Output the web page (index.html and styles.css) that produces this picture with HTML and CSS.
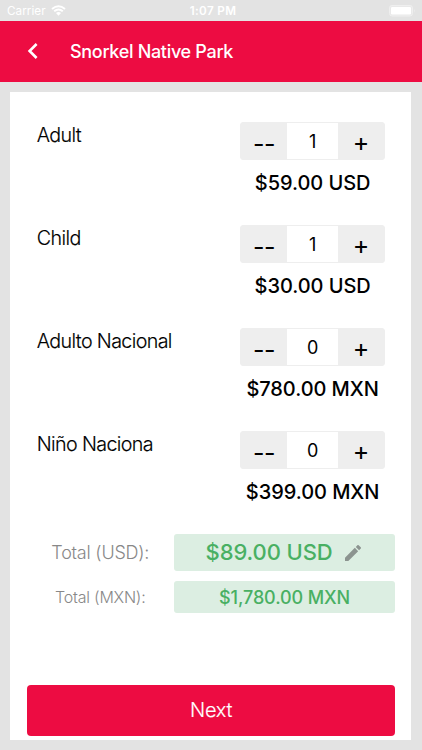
FILE: index.html
```html
<!DOCTYPE html>
<html lang="en">
<head>
<meta charset="utf-8">
<title>Snorkel Native Park</title>
<link rel="stylesheet" href="styles.css">
</head>
<body>
<div class="status">
  <div class="status-left"><span class="carrier">Carrier</span>
    <svg class="wifi" viewBox="0 0 15 11"><path d="M1 4Q7.5-1.5 14 4M3.2 6.3Q7.5 2.7 11.8 6.3" fill="none" stroke="#fff" stroke-width="1.9"/><path d="M5 8.1Q7.5 6 10 8.1L7.5 10.7z" fill="#fff"/></svg>
  </div>
  <span class="time">1:07 PM</span>
  <svg class="battery" viewBox="0 0 27 12"><rect x=".5" y=".5" width="23" height="10.5" rx="2.5" fill="#e9e9e9" stroke="#efefef"/><rect x="2" y="2" width="20" height="7.5" rx="1.2" fill="#fff"/><path d="M25 4q1.5 1.7 0 3.5z" fill="#efefef"/></svg>
</div>
<header class="header">
  <svg class="back" viewBox="0 0 12 18"><path d="M10.6 2L3.6 9l7 7" fill="none" stroke="#fff" stroke-width="2.6"/></svg>
  <h1 class="title">Snorkel Native Park</h1>
</header>
<main class="card">
  <section class="row"><span class="label">Adult</span><div class="qty"><div class="stepper"><button class="minus">--</button><span class="count">1</span><button class="plus">+</button></div><div class="price">$59.00 USD</div></div></section>
  <section class="row"><span class="label">Child</span><div class="qty"><div class="stepper"><button class="minus">--</button><span class="count">1</span><button class="plus">+</button></div><div class="price">$30.00 USD</div></div></section>
  <section class="row"><span class="label">Adulto Nacional</span><div class="qty"><div class="stepper"><button class="minus">--</button><span class="count">0</span><button class="plus">+</button></div><div class="price">$780.00 MXN</div></div></section>
  <section class="row"><span class="label">Niño Naciona</span><div class="qty"><div class="stepper"><button class="minus">--</button><span class="count">0</span><button class="plus">+</button></div><div class="price">$399.00 MXN</div></div></section>
  <div class="total total-main"><span class="total-label">Total (USD):</span><div class="amount"><span>$89.00 USD</span><svg class="pencil" viewBox="3 3 18 18"><path fill="#8c9490" d="M3 17.25V21h3.75L17.8 9.94l-3.75-3.75zM20.7 7.04a1 1 0 0 0 0-1.41l-2.34-2.34a1 1 0 0 0-1.41 0l-1.83 1.83 3.75 3.75z"/></svg></div></div>
  <div class="total total-sub"><span class="total-label">Total (MXN):</span><div class="amount"><span>$1,780.00 MXN</span></div></div>
  <button class="next">Next</button>
</main>
</body>
</html>
```
FILE: styles.css
```css
* { box-sizing: border-box; }
body { margin: 0; width: 422px; height: 750px; overflow: hidden; display: flex; flex-direction: column; background: #e3e3e3; color: #000; font-family: Inter, "Liberation Sans", sans-serif; }
button { border: 0; margin: 0; padding: 0; font-family: inherit; color: inherit; }
.status { flex: none; height: 20.5px; display: grid; grid-template-columns: 1fr auto 1fr; align-items: center; padding: 1px 6px 0 7px; color: #fff; font-size: 11.7px; }
.status-left { display: flex; align-items: center; gap: 5px; }
.carrier { letter-spacing: .05px; }
.wifi { width: 15px; height: 11px; }
.time { font-weight: 600; letter-spacing: .35px; padding-left: 3px; }
.battery { width: 27px; height: 12px; justify-self: end; }
.header { flex: none; height: 61.5px; background: #ed0c42; color: #fff; display: flex; align-items: center; padding-left: 26px; }
.back { width: 12px; height: 18px; }
.title { margin: 1px 0 0 32px; font-size: 18px; line-height: 24px; font-weight: 500; letter-spacing: -.31px; }
.card { flex: none; width: 401px; height: 648px; margin: 10px 0 0 10.4px; padding: 30.4px 16px 0 16.4px; background: #fff; display: flex; flex-direction: column; }
.row { flex: none; height: 103px; display: flex; justify-content: space-between; padding: 0 10.3px 0 10px; }
.label { padding-top: 1px; font-size: 19.7px; line-height: 25px; font-weight: 300; letter-spacing: -.63px; -webkit-text-stroke: .15px #000; }
.qty { width: 145px; }
.stepper { height: 38px; display: grid; grid-template-columns: 46px 1fr 46px; border: 1px solid #eee; border-radius: 3px; background: #eee; overflow: hidden; text-align: center; }
.minus, .plus { height: 36px; background: transparent; line-height: 34px; }
.minus { font-size: 25px; padding-top: 4px; letter-spacing: -.3px; }
.plus { font-size: 25px; padding-top: 1px; }
.count { background: #fff; font-size: 18px; line-height: 37px; }
.price { margin-top: 9.5px; font-size: 20px; line-height: 26px; font-weight: 500; text-align: center; white-space: nowrap; letter-spacing: -.06px; }
.total { flex: none; display: flex; color: #888; font-weight: 300; margin-top: -.4px; }
.total-label { width: 147px; text-align: center; letter-spacing: -.22px; }
.amount { flex: 1; display: flex; align-items: center; justify-content: center; border-radius: 3px; background: #dceee2; color: #49b063; font-weight: 500; letter-spacing: -.1px; }
.total-main { height: 37px; font-size: 18px; line-height: 37px; }
.total-main .amount { font-size: 22px; gap: 12px; padding-right: 3px; }
.total-sub { height: 32px; margin-top: 9.8px; font-size: 16px; line-height: 32px; }
.total-sub .amount { font-size: 18px; line-height: 28px; padding-top: 2px; }
.pencil { width: 16px; height: 16px; }
.next { flex: none; height: 51px; margin: auto 0 4.5px; border-radius: 4px; background: #ed0c42; color: #fff; font-size: 20px; font-weight: 300; letter-spacing: -.25px; -webkit-text-stroke: .15px #fff; }
```
